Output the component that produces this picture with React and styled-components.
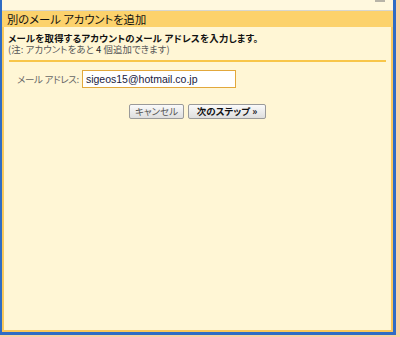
import React from "react";
import styled, { createGlobalStyle } from "styled-components";

const Global = createGlobalStyle`
  html, body { margin: 0; padding: 0; }
  body {
    background: #f6d2a8;
    font-family: "Noto Sans CJK JP", "Liberation Sans", sans-serif;
    width: 400px;
    height: 337px;
    overflow: hidden;
  }
`;

const Page = styled.div`
  width: 400px;
  height: 337px;
  display: flex;
  flex-direction: column;
  align-items: flex-start;
`;

const Window = styled.div`
  box-sizing: border-box;
  width: 396px;
  height: 335px;
  border-left: 2px solid #2f6cc4;
  border-right: 3px solid #2f6cc4;
  border-bottom: 3px solid #2f6cc4;
  display: flex;
  flex-direction: column;
  background: #fff6d5;
`;

const TopStrip = styled.div`
  height: 10px;
  flex: none;
  background: #fff8de;
  border-bottom: 1px solid #d6d6d0;
  display: flex;
  justify-content: flex-end;
  padding-right: 8px;
`;

const TabNub = styled.div`
  width: 10px;
  height: 2px;
  background: #b8b4a8;
`;

const Dialog = styled.div`
  flex: 1;
  display: flex;
  flex-direction: column;
  border: 2px solid #f8c85c;
  border-top: none;
  background: #fff6d5;
`;

const Header = styled.div`
  height: 16px;
  flex: none;
  background: #fcd26c;
  margin: 0 -2px;
  padding-left: 5px;
  font-size: 11.3px;
  line-height: 16px;
  color: #111;
  font-feature-settings: "palt";
  white-space: nowrap;
`;

const Body = styled.div`
  display: flex;
  flex-direction: column;
  padding: 6px 5px 0 4px;
`;

const Lead = styled.div`
  font-size: 9.4px;
  letter-spacing: 0.25px;
  line-height: 11px;
  height: 11px;
  font-weight: bold;
  color: #111;
  font-feature-settings: "palt";
  white-space: nowrap;
`;

const Note = styled.div`
  font-size: 9.4px;
  line-height: 11px;
  height: 11px;
  letter-spacing: 0.1px;
  color: #555;
  font-feature-settings: "palt";
  white-space: nowrap;
`;

const Num = styled.span`
  color: #222;
`;

const Rule = styled.div`
  height: 2px;
  background: #f8c64a;
  margin: 5px 0 0 1px;
`;

const FieldRow = styled.div`
  display: flex;
  align-items: center;
  gap: 3px;
  height: 18px;
  margin-top: 8px;
  padding-left: 9px;
`;

const Label = styled.label`
  font-size: 9.5px;
  letter-spacing: -0.3px;
  color: #666;
  font-feature-settings: "palt";
  white-space: nowrap;
`;

const Input = styled.div`
  box-sizing: border-box;
  width: 154px;
  height: 18px;
  border: 1px solid #e2a83c;
  background: #fff;
  font-family: "Liberation Sans", Arial, sans-serif;
  font-size: 10.5px;
  line-height: 16px;
  color: #1a1a40;
  padding-left: 3px;
`;

const Buttons = styled.div`
  display: flex;
  gap: 4px;
  height: 15px;
  margin-top: 16px;
  padding-left: 121px;
`;

const Button = styled.button`
  box-sizing: border-box;
  width: ${(p) => p.$w}px;
  height: 15px;
  padding: 0;
  border: 1px solid #9a9a9a;
  border-radius: 2px;
  background: linear-gradient(#fafafa, #dedede);
  font-family: "Noto Sans CJK JP", sans-serif;
  font-size: 9.5px;
  line-height: 13px;
  font-weight: ${(p) => (p.$primary ? "bold" : "normal")};
  color: ${(p) => (p.$primary ? "#111" : "#555")};
  font-feature-settings: "palt";
  white-space: nowrap;
`;

export default function App() {
  return (
    <Page>
      <Global />
      <Window>
        <TopStrip>
          <TabNub />
        </TopStrip>
        <Dialog>
          <Header>別のメール アカウントを追加</Header>
          <Body>
            <Lead>メールを取得するアカウントのメール アドレスを入力します。</Lead>
            <Note>
              (注: アカウントをあと <Num>4</Num> 個追加できます)
            </Note>
            <Rule />
            <FieldRow>
              <Label>メール アドレス:</Label>
              <Input>sigeos15@hotmail.co.jp</Input>
            </FieldRow>
            <Buttons>
              <Button $w={55}>キャンセル</Button>
              <Button $w={78} $primary>
                次のステップ »
              </Button>
            </Buttons>
          </Body>
        </Dialog>
      </Window>
    </Page>
  );
}
